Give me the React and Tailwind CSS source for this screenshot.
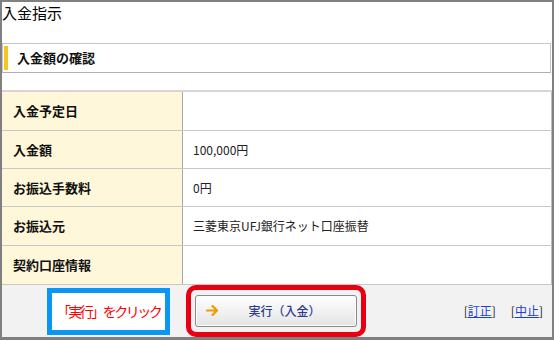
import React from "react";

const ROWS = [
  { label: "入金予定日", value: "", h: "h-[39px]" },
  { label: "入金額", value: "100,000円", h: "h-[38px]" },
  { label: "お振込手数料", value: "0円", h: "h-[38px]" },
  { label: "お振込元", value: "三菱東京UFJ銀行ネット口座振替", h: "h-[39px]" },
  { label: "契約口座情報", value: "", h: "h-[39px]" },
];

const ArrowIcon = () => (
  <svg width="13" height="11" viewBox="0 0 13 11" fill="none">
    <path
      d="M1 5.5h10M6.5 1l4.5 4.5L6.5 10"
      stroke="#f39800"
      strokeWidth="2.2"
      strokeLinecap="round"
      strokeLinejoin="round"
    />
  </svg>
);

const App = () => {
  return (
    <div className="w-[554px] h-[340px] bg-white border-2 border-b-[3px] border-[#808080] flex flex-col font-['Noto_Sans_CJK_JP','Noto_Sans',sans-serif] text-[#111]">
      {/* Page title */}
      <h1 className="h-[41px] text-[15px] leading-[22px] text-black">入金指示</h1>

      {/* Section header */}
      <div className="h-[30px] mr-[1px] border border-[#c4c4c4] border-b-[#b0b0b0] flex items-center">
        <div className="ml-[1px] w-[4px] h-[24px] bg-[#f7c51e]"></div>
        <span className="ml-[9px] text-[13px] font-bold">入金額の確認</span>
      </div>

      {/* Confirmation table */}
      <div className="mt-[17px] border-t-2 border-[#d6d6d6]">
        {ROWS.map((row) => (
          <div
            key={row.label}
            className={`${row.h} flex border-b border-[#c8c8c8]`}
          >
            <div className="w-[181px] bg-[#fff7d9] border-r border-[#a8a8a8] flex items-center pl-[11px] text-[13px] font-bold">
              {row.label}
            </div>
            <div className="flex-1 flex items-center pl-[10px] text-[12px] text-[#222] border-r border-[#bdbdbd]">
              {row.value}
            </div>
          </div>
        ))}
      </div>

      {/* Footer actions */}
      <div className="flex-1 bg-[#f2f2f2] flex items-center">
        <div className="ml-[45px] w-[123px] h-[47px] border-[5px] border-[#0a96f5] bg-white flex items-center justify-center text-[14px] tracking-[-2.5px] text-[#ff0000]">
          「実行」をクリック
        </div>
        <div className="ml-[16px] w-[180px] h-[52px] border-[5px] border-[#e60012] rounded-[10px] flex items-center px-[4px] -mt-[1px]">
          <button className="w-full h-[32px] rounded-[3px] border border-[#8a8a8a] bg-gradient-to-b from-white to-[#e4e4e4] shadow-[inset_0_0_0_1px_#ffffff] flex items-center pl-[10px]">
            <ArrowIcon />
            <span className="flex-1 text-center text-[12px] font-medium text-[#2e3a8f] pr-[6px]">
              実行（入金）
            </span>
          </button>
        </div>
        <div className="ml-auto mr-[9px] flex gap-[15px] text-[12px] text-[#222]">
          <span>
            [<a href="#" className="text-[#1a3fd4] underline">訂正</a>]
          </span>
          <span>
            [<a href="#" className="text-[#1a3fd4] underline">中止</a>]
          </span>
        </div>
      </div>
    </div>
  );
};

export default App;
